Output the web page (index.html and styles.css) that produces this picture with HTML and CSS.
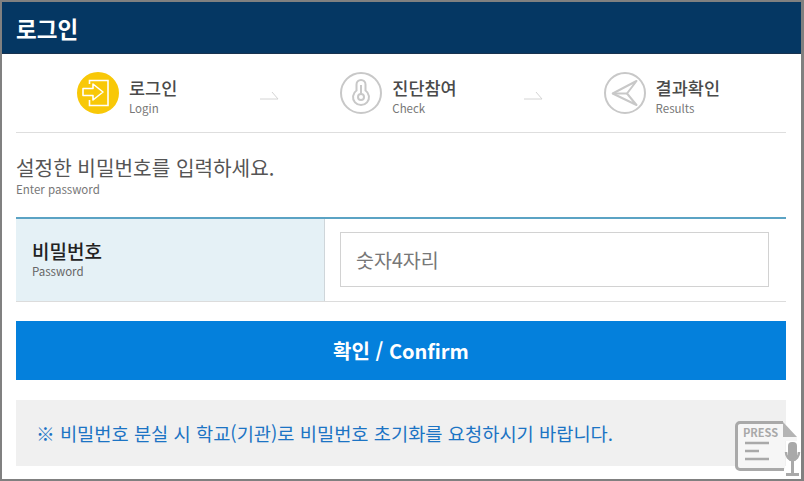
FILE: index.html
```html
<!DOCTYPE html>
<html lang="ko">
<head>
    <meta charset="UTF-8">
    <meta name="viewport" content="width=device-width, initial-scale=1.0">
    <title>로그인</title>
    <link rel="stylesheet" href="styles.css">
</head>
<body>
    <div class="frame">
        <div class="title-bar">로그인</div>
        <div class="content">
            <ul class="steps">
                <li class="step">
                    <span class="step-icon active">
                        <svg width="42" height="42" viewBox="0 0 42 42" fill="none" stroke="#fff" stroke-width="1.6">
                            <path d="M12.500 12V8.500H31v25H12.500V28"/>
                            <path d="M6 16.500h10V12l10 8-10 8v-4.500H6z" stroke-linejoin="round"/>
                        </svg>
                    </span>
                    <span class="step-text"><strong>로그인</strong><small>Login</small></span>
                    <svg class="step-arrow" width="19" height="9" viewBox="0 0 19 9" fill="none" stroke="#d4d4d4" stroke-width="1"><path d="M0 8h18L12 1"/></svg>
                </li>
                <li class="step">
                    <span class="step-icon">
                        <svg width="42" height="42" viewBox="0 0 42 42" fill="none" stroke="#c8c8c8" stroke-width="2">
                            <path d="M16.500 18.500v-6a4.500 4.500 0 0 1 9 0v6a8 8 0 1 1-9 0z"/>
                            <circle cx="21" cy="25" r="3"/>
                            <path d="M21 22V13"/>
                        </svg>
                    </span>
                    <span class="step-text"><strong>진단참여</strong><small>Check</small></span>
                    <svg class="step-arrow" width="19" height="9" viewBox="0 0 19 9" fill="none" stroke="#d4d4d4" stroke-width="1"><path d="M0 8h18L12 1"/></svg>
                </li>
                <li class="step">
                    <span class="step-icon">
                        <svg width="42" height="42" viewBox="0 0 42 42" fill="none" stroke="#c8c8c8" stroke-width="2" stroke-linejoin="round">
                            <path d="M8.700 21.500L32.500 9 23 21.500 32.500 33z"/>
                            <path d="M8.700 21.500H23"/>
                        </svg>
                    </span>
                    <span class="step-text"><strong>결과확인</strong><small>Results</small></span>
                </li>
            </ul>

            <p class="guide">설정한 비밀번호를 입력하세요.</p>
            <p class="guide-en">Enter password</p>

            <div class="form-row">
                <div class="form-label"><strong>비밀번호</strong><small>Password</small></div>
                <div class="form-field"><input type="password" placeholder="숫자4자리"></div>
            </div>

            <button class="confirm" type="button">확인 / Confirm</button>

            <div class="notice">※ 비밀번호 분실 시 학교(기관)로 비밀번호 초기화를 요청하시기 바랍니다.</div>
        </div>

        <svg class="press" width="66" height="56" viewBox="0 0 66 56">
            <path d="M2 5a3 3 0 0 1 3-3h43l14 14v4H50v28H5a3 3 0 0 1-3-3z" fill="#f6f6f6"/>
            <path d="M48 1.500H5A3.500 3.500 0 0 0 1.500 5v40A3.500 3.500 0 0 0 5 48.500h44" fill="none" stroke="#a9a9a9" stroke-width="3"/>
            <path d="M48 1l14 15H48z" fill="#b4b4b4"/>
            <text x="8" y="16" class="press-text">PRESS</text>
            <path d="M10 22h24M10 30h14M10 38h24" stroke="#a9a9a9" stroke-width="2.500" fill="none"/>
            <rect x="53" y="21" width="9" height="19" rx="4" fill="#a9a9a9"/>
            <path d="M51 31a6.500 8 0 0 0 13 0" fill="none" stroke="#a9a9a9" stroke-width="2.500"/>
            <path d="M57.500 38v14M51 53.500h13" stroke="#a9a9a9" stroke-width="3"/>
        </svg>
    </div>
</body>
</html>
```

FILE: styles.css
```css
* {
    box-sizing: border-box;
}
html, body {
    margin: 0;
    padding: 0;
}
body {
    font-family: "Noto Sans CJK KR", "Noto Sans", sans-serif;
    background: #fff;
}
.frame {
    position: relative;
    width: 804px;
    height: 481px;
    overflow: hidden;
    border: solid #808080;
    border-width: 2px 3px 2px 2px;
}
.title-bar {
    height: 52px;
    padding-left: 14px;
    background: #053763;
    border-bottom: 1px solid #17324f;
    color: #fff;
    font-size: 22.5px;
    font-weight: 700;
    line-height: 53px;
}
.content {
    padding: 0 15px 0 14px;
}
.steps {
    display: flex;
    height: 79px;
    margin: 0;
    padding: 0;
    list-style: none;
    border-bottom: 1px solid #dedede;
}
.step {
    display: flex;
    align-items: center;
    width: 263.3px;
    padding: 0 0 0 61px;
}
.step:last-child {
    flex: 1;
}
.step-icon {
    width: 42px;
    height: 42px;
    border: 2px solid #c8c8c8;
    border-radius: 50%;
    flex: none;
    display: flex;
    align-items: center;
    justify-content: center;
}
.step-icon svg {
    flex: none;
}
.step-icon.active {
    background: #f8c808;
    border-color: #f8c808;
}
.step-text {
    margin: 6px 0 0 10px;
    display: flex;
    flex-direction: column;
}
.step-text strong {
    font-size: 17.5px;
    font-weight: 500;
    line-height: 24px;
    color: #4a4a4a;
}
.step-text small {
    font-size: 11.500px;
    line-height: 17px;
    color: #777;
}
.step-arrow {
    margin: 5px 0 0 auto;
}
.guide {
    margin: 21px 0 0;
    font-size: 20.200px;
    line-height: 27px;
    color: #555;
}
.guide-en {
    margin: 0;
    font-size: 11.500px;
    line-height: 16px;
    color: #777;
}
.form-row {
    display: flex;
    height: 85px;
    margin-top: 20px;
    border-top: 2px solid #5ba3c4;
    border-bottom: 1px solid #dcdcdc;
}
.form-label {
    width: 309px;
    padding: 0 16px 3px;
    display: flex;
    flex-direction: column;
    justify-content: center;
    background: #e5f1f6;
    border-right: 1px solid #cfd6da;
}
.form-label strong {
    font-size: 19px;
    font-weight: 500;
    line-height: 25px;
    color: #222;
}
.form-label small {
    font-size: 11.500px;
    line-height: 16px;
    color: #666;
}
.form-field {
    flex: 1;
    padding: 13px 17px 13px 15px;
}
.form-field input {
    display: block;
    width: 100%;
    height: 55px;
    padding: 0 15px;
    border: 1px solid #d2d2d2;
    background: #fff;
    font-family: inherit;
    font-size: 19.500px;
}
.form-field input::placeholder {
    color: #777;
    opacity: 1;
}
.confirm {
    display: block;
    width: 100%;
    height: 59px;
    margin-top: 19px;
    border: none;
    background: #0480dc;
    color: #fff;
    font-family: inherit;
    font-size: 20px;
    font-weight: 700;
}
.notice {
    height: 66px;
    margin-top: 20px;
    padding-left: 20px;
    background: #f0f0f0;
    color: #1c74c4;
    font-size: 18.700px;
    line-height: 66px;
}
.press {
    position: absolute;
    left: 733px;
    top: 419px;
}
.press-text {
    font-size: 11px;
    font-weight: 700;
    fill: #a9a9a9;
}
```
